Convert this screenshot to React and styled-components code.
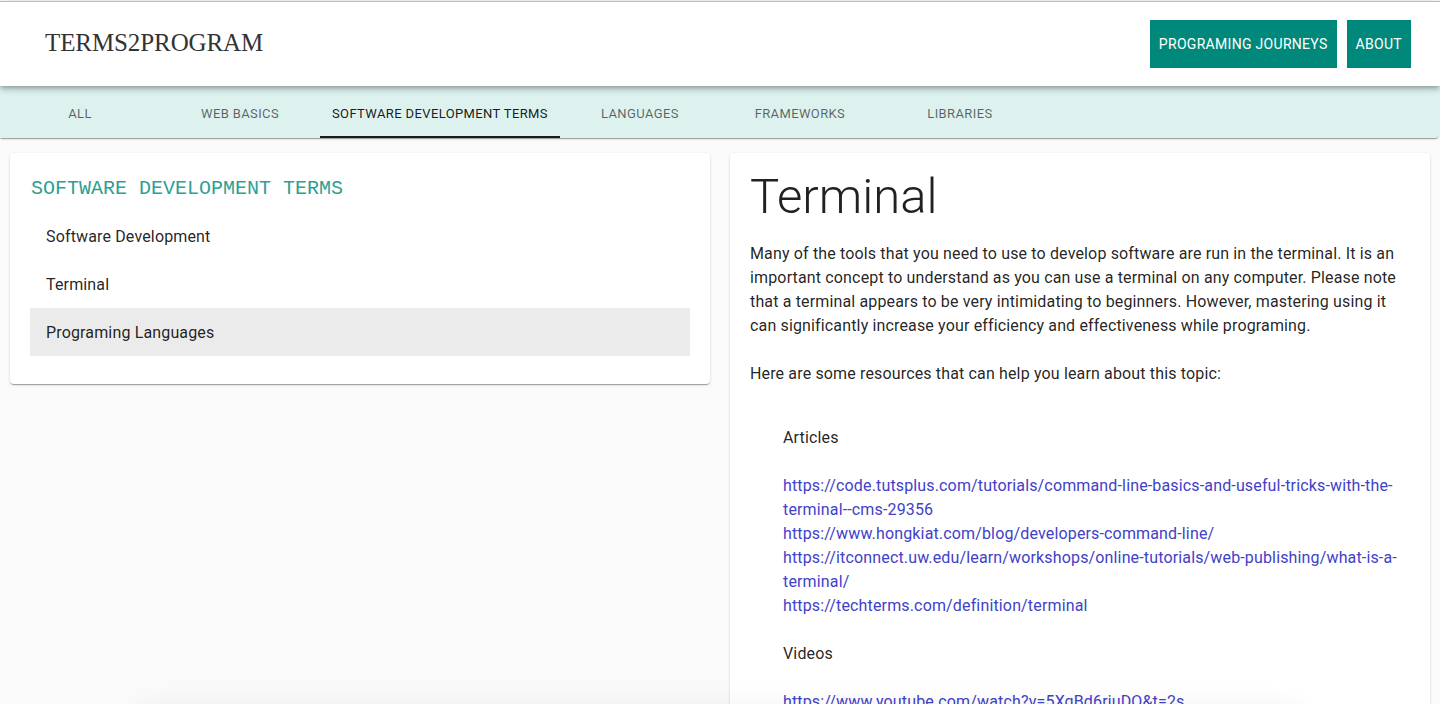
import React from 'react';
import styled, { createGlobalStyle } from 'styled-components';

// page for terms2program: header, category tabs, term list and term detail

const GlobalStyle = createGlobalStyle`
  html, body {
    margin: 0;
    padding: 0;
    background: #fafafa;
    font-family: Roboto, "Liberation Sans", Arial, sans-serif;
    color: rgba(0, 0, 0, 0.87);
    overflow: hidden;
  }
  * { box-sizing: border-box; }
`;

const Page = styled.div`
  padding-top: 1px;
  min-height: 704px;
  background: #fafafa;
`;

const AppBar = styled.header`
  position: relative;
  z-index: 2;
  height: 85px;
  background: #fff;
  border-top: 1px solid #bdbdbd;
  display: flex;
  align-items: center;
  justify-content: space-between;
  padding: 0 29px 0 45px;
  box-shadow: 0 2px 4px -1px rgba(0, 0, 0, 0.2), 0 4px 5px 0 rgba(0, 0, 0, 0.14),
    0 1px 10px 0 rgba(0, 0, 0, 0.12);
`;

const Logo = styled.div`
  font-family: "Liberation Serif", "DejaVu Serif", serif;
  font-size: 25px;
  letter-spacing: -0.1px;
  color: #333;
  margin-top: -2px;
`;

const NavButtons = styled.nav`
  display: flex;
  gap: 10px;
`;

const NavButton = styled.button`
  height: 48px;
  padding: 0 9px;
  border: none;
  border-radius: 0;
  background: #00897b;
  color: #fff;
  font-family: Roboto, sans-serif;
  font-size: 14px;
  font-weight: 400;
  letter-spacing: 0.3px;
  text-transform: uppercase;
  cursor: pointer;
`;

const TabBar = styled.div`
  position: relative;
  z-index: 1;
  height: 52px;
  width: 1439px;
  background: #ddf2ef;
  border-radius: 0 0 4px 0;
  display: flex;
  box-shadow: 0 2px 1px -1px rgba(0, 0, 0, 0.2), 0 1px 1px 0 rgba(0, 0, 0, 0.14),
    0 1px 3px 0 rgba(0, 0, 0, 0.12);
`;

const Tab = styled.div`
  position: relative;
  min-width: 160px;
  padding: 2px 12px 0;
  display: flex;
  align-items: center;
  justify-content: center;
  font-size: 13px;
  letter-spacing: 0.38px;
  text-transform: uppercase;
  color: ${(p) => (p.$active ? 'rgba(0,0,0,0.9)' : 'rgba(0,0,0,0.6)')};

  &::after {
    content: '';
    display: ${(p) => (p.$active ? 'block' : 'none')};
    position: absolute;
    left: 0;
    right: 0;
    bottom: 0;
    height: 2px;
    background: #1b1b1b;
  }
`;

const Content = styled.main`
  display: grid;
  grid-template-columns: 700px 700px;
  gap: 20px;
  padding: 15px 10px 0;
  align-items: start;
`;

const Card = styled.section`
  background: #fff;
  border-radius: 4px;
  padding: ${(p) => p.$pad || '20px'};
  box-shadow: 0 2px 1px -1px rgba(0, 0, 0, 0.2), 0 1px 1px 0 rgba(0, 0, 0, 0.14),
    0 1px 3px 0 rgba(0, 0, 0, 0.12);
`;

const DetailCard = styled(Card)`
  min-height: 600px;
`;

const ListTitle = styled.h2`
  margin: 0;
  height: 31px;
  line-height: 31px;
  padding-left: 1px;
  font-family: "Liberation Mono", "Courier New", monospace;
  font-size: 20px;
  font-weight: 400;
  color: #2f9f93;
`;

const TermList = styled.ul`
  list-style: none;
  margin: 0;
  padding: 8px 0;
`;

const TermItem = styled.li`
  height: 48px;
  display: flex;
  align-items: center;
  padding-left: 16px;
  font-size: 16px;
  letter-spacing: 0.15px;
  background: ${(p) => (p.$selected ? '#ebebeb' : 'transparent')};
`;

const Title = styled.h1`
  margin: 0 0 17px;
  font-size: 49px;
  line-height: 56px;
  font-weight: 300;
  color: #212121;
`;

const Text = styled.p`
  margin: 0 0 ${(p) => p.$gap || '24px'};
  font-size: 16px;
  line-height: 24px;
  letter-spacing: 0.15px;
`;

const Resources = styled.div`
  padding: 40px 0 0 33px;
`;

const GroupName = styled.div`
  font-size: 16px;
  line-height: 24px;
  letter-spacing: 0.15px;
  margin-bottom: 24px;
`;

const Links = styled.div`
  display: flex;
  flex-direction: column;
  margin-bottom: 24px;
`;

const ResourceLink = styled.a`
  font-size: 16px;
  line-height: 24px;
  letter-spacing: 0.15px;
  color: #4141c8;
  text-decoration: none;
`;

const BottomSheet = styled.div`
  position: fixed;
  left: 150px;
  right: 150px;
  top: 718px;
  height: 60px;
  background: #fff;
  box-shadow: 0 0 30px 6px rgba(0, 0, 0, 0.1);
`;

const tabs = ['All', 'Web Basics', 'Software Development Terms', 'Languages', 'Frameworks', 'Libraries'];

const terms = ['Software Development', 'Terminal', 'Programing Languages'];

const articles = [
  'https://code.tutsplus.com/tutorials/command-line-basics-and-useful-tricks-with-the-terminal--cms-29356',
  'https://www.hongkiat.com/blog/developers-command-line/',
  'https://itconnect.uw.edu/learn/workshops/online-tutorials/web-publishing/what-is-a-terminal/',
  'https://techterms.com/definition/terminal',
];

const videos = ['https://www.youtube.com/watch?v=5XgBd6rjuDQ&t=2s'];

export default function App() {
  return (
    <Page>
      <GlobalStyle />
      <AppBar>
        <Logo>TERMS2PROGRAM</Logo>
        <NavButtons>
          <NavButton>Programing Journeys</NavButton>
          <NavButton>About</NavButton>
        </NavButtons>
      </AppBar>

      <TabBar>
        {tabs.map((t) => (
          <Tab key={t} $active={t === 'Software Development Terms'}>
            {t}
          </Tab>
        ))}
      </TabBar>

      <Content>
        <Card>
          <ListTitle>SOFTWARE DEVELOPMENT TERMS</ListTitle>
          <TermList>
            {terms.map((t) => (
              <TermItem key={t} $selected={t === 'Programing Languages'}>
                {t}
              </TermItem>
            ))}
          </TermList>
        </Card>

        <DetailCard $pad="16px 20px 20px">
          <Title>Terminal</Title>
          <Text>
            Many of the tools that you need to use to develop software are run in the terminal. It
            is an important concept to understand as you can use a terminal on any computer. Please
            note that a terminal appears to be very intimidating to beginners. However, mastering
            using it can significantly increase your efficiency and effectiveness while programing.
          </Text>
          <Text $gap="0">Here are some resources that can help you learn about this topic:</Text>
          <Resources>
            <GroupName>Articles</GroupName>
            <Links>
              {articles.map((a) => (
                <ResourceLink key={a} href={a}>
                  {a}
                </ResourceLink>
              ))}
            </Links>
            <GroupName>Videos</GroupName>
            <Links>
              {videos.map((v) => (
                <ResourceLink key={v} href={v}>
                  {v}
                </ResourceLink>
              ))}
            </Links>
          </Resources>
        </DetailCard>
      </Content>
      <BottomSheet />
    </Page>
  );
}
